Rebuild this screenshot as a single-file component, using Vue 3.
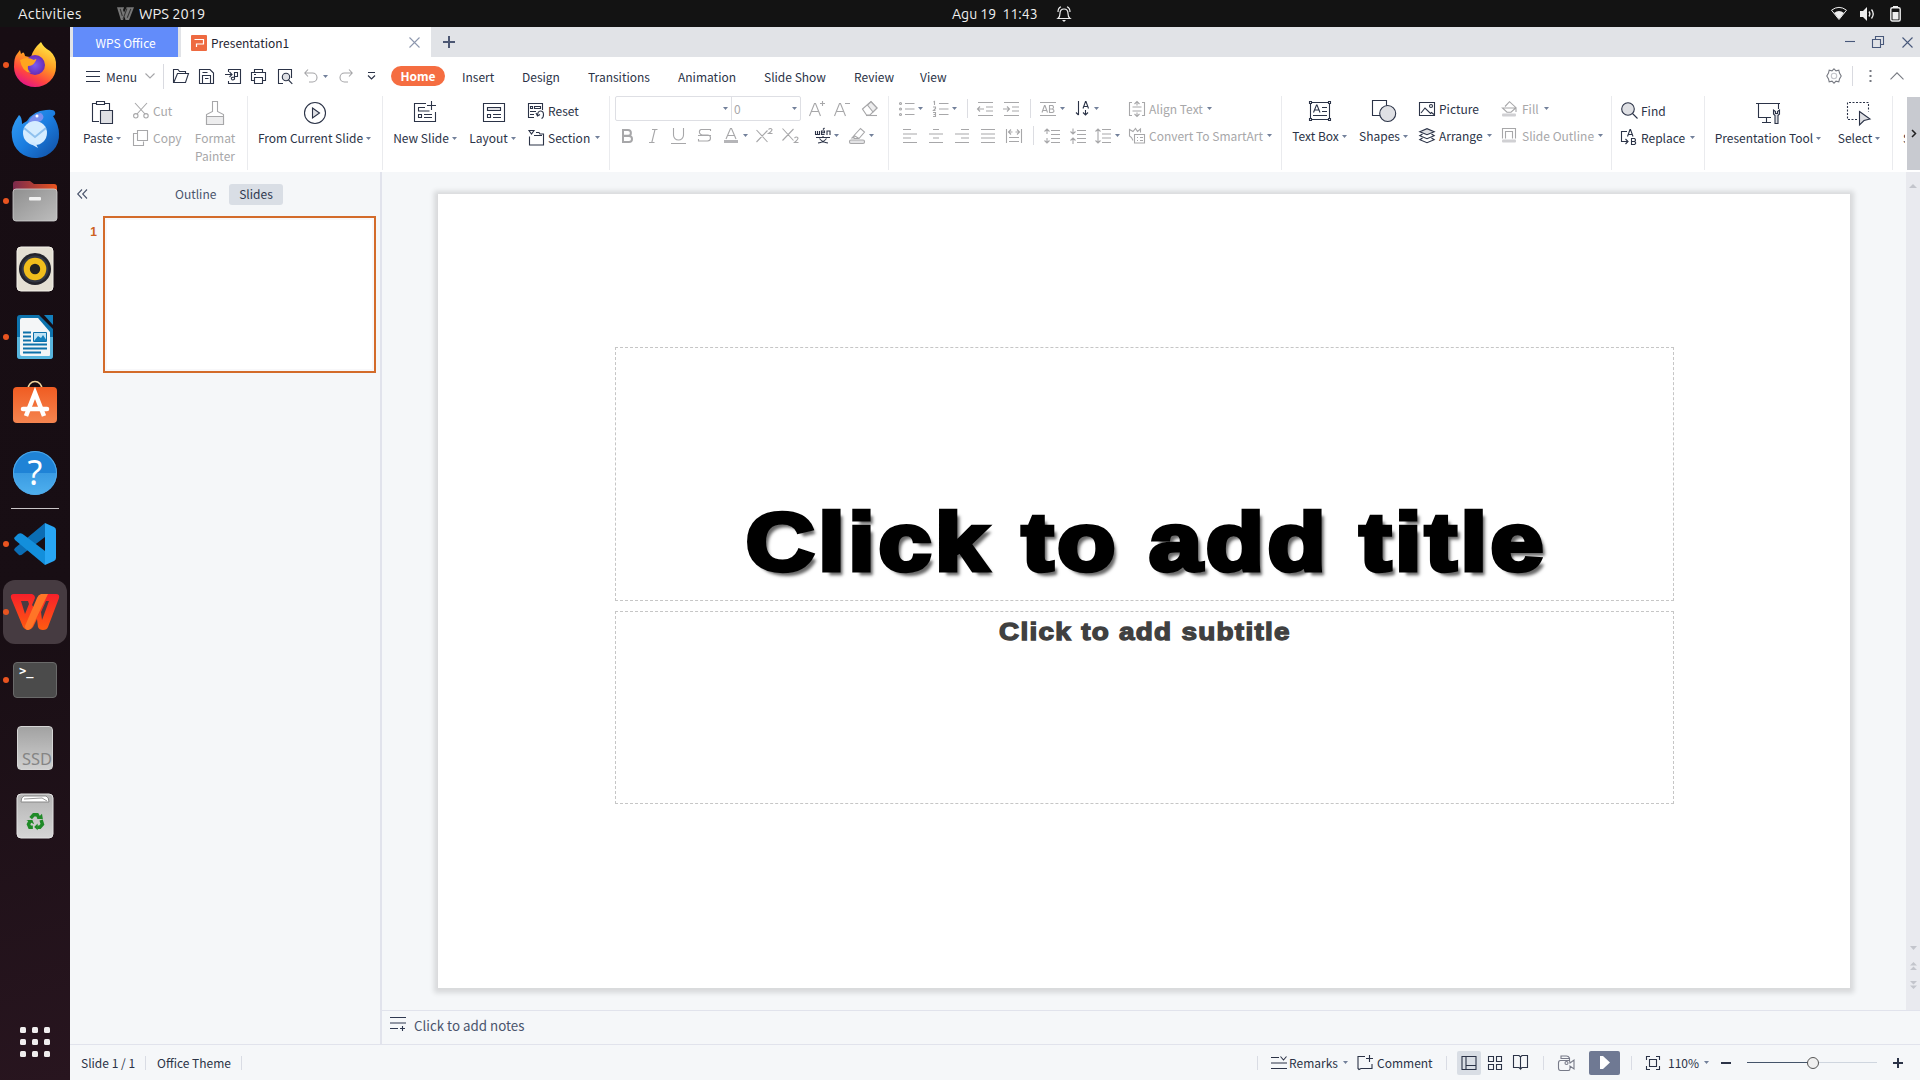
<script setup>
import { h } from 'vue'

// Line icons, drawn on a pixel grid: [width, height, markup]
const glyphs = {
  burger: [14, 11, '<path d="M0 .5h14M0 5.5h14M0 10.5h14"/>'],
  chevDown: [10, 6, '<path d="M.5.5 5 5 9.5.5"/>'],
  chevUp: [14, 8, '<path d="M.5 7.300 7 .8l6.500 6.500"/>'],
  open: [16, 14, '<path d="M12.500 4.500v-2h-6l-1.500-2H.5v13h12l3-9H4.500L1 13"/>'],
  save: [15, 15, '<path d="M.5.5h10.500l3.500 3.500v10.500H.5zM3.500 14.500v-8h8v8M6 9.500h3.500M3.500 3.500h5"/>'],
  pdf: [16, 15, '<path d="M3.500 3V.5h12v14h-12V12M0 5.500h7M4.500 3l2.500 2.500L4.500 8M9.500 3.500h3v4h-3zM9.500 7.500v2.500q-2 2-3 0t3-2"/>'],
  print: [15, 15, '<path d="M3.500 3.500v-3h8v3M3.500 11.500h-3v-8h14v8h-3M3.500 8.500h8v6h-8zM3 5.500h2"/>'],
  preview: [15, 15, '<path d="M5 14.500H.5V.5h13V9"/><circle cx="8" cy="8" r="3.700" fill="#dfe0e4"/><path d="M10.500 11l3.800 3.800"/>'],
  undo: [14, 14, '<path d="M4 .5.8 4 4 7.500M1 4h7.500a4.500 4.500 0 0 1 0 9H5"/>'],
  redo: [14, 14, '<path d="M10 .5l3.200 3.500L10 7.500M13 4H5.500a4.500 4.500 0 0 0 0 9H9"/>'],
  more: [9, 8, '<path d="M1 .5h7M1 3.500l3.500 3.500L8 3.500"/>'],
  gear: [16, 16, '<path d="M8 .8 10 2.800l2.800-.6.7 2.900L15.200 8l-1.700 2.900-.7 2.900-2.800-.6L8 15.200l-2-2-2.800.6-.7-2.900L.8 8l1.700-2.900.7-2.900 2.800.6z"/><circle cx="8" cy="8" r="2.700" stroke="#c5c6cb"/>'],
  dots: [3, 13, '<path d="M.5 0h2v2h-2zM.5 5h2v2h-2zM.5 10h2v2h-2z" fill="currentColor" stroke="none"/>'],
  caret: [5, 3, '<path d="M0 0h5L2.500 3z" fill="currentColor" stroke="none"/>'],
  close: [11, 11, '<path d="M.5.5l10 10M10.500.5l-10 10"/>'],
  plus: [12, 12, '<path d="M6 0v12M0 6h12" stroke-width="2"/>'],
  minus: [10, 2, '<path d="M0 1h10" stroke-width="2"/>'],
  plusSm: [10, 10, '<path d="M5 0v10M0 5h10" stroke-width="2"/>'],
  minimize: [10, 2, '<path d="M0 .5h10"/>'],
  restore: [12, 12, '<path d="M.5 3.500h8v8h-8zM3.500 3.500v-3h8v8h-3"/>'],
  collapse: [11, 10, '<path d="M5 .5.7 5 5 9.500M10 .5 5.700 5 10 9.500"/>'],

  paste: [24, 24, '<path d="M8 20.500H1.500v-18h4M13.500 2.500h5V9M5.500.5h8v3h-8z"/><path d="M9.500 9.500h12v13h-12z" fill="#dfe0e4"/>'],
  cut: [16, 16, '<path d="M2 0l10 11M14 0L4 11"/><circle cx="2.800" cy="12.800" r="2.200"/><circle cx="13" cy="12.800" r="2.200"/>'],
  copy: [16, 16, '<path d="M4.500 3.500h-4v12h10v-4M4.500.5h10v10h-10z"/>'],
  painter: [24, 24, '<path d="M9.500.5h5v10l6 3v10h-17v-10l6-3z"/><path d="M3.500 15.500h17v8h-17z" fill="#ededee"/>'],
  play: [24, 24, '<circle cx="12" cy="12" r="10.500"/><path d="M9.500 7l7 5-7 5z" fill="#dfe0e4"/>'],
  newSlide: [24, 24, '<path d="M13 2.500H1.500v18h21V11M18.500 0v9M14 4.500h9M5 6.500h7M5.500 6.500v3.500h11M5.500 13.500h3v3h-3zM11 13.500h8M11 16.500h8"/>'],
  layout: [24, 24, '<path d="M2.500 2.500h21v18h-21z"/><path d="M6.500 6.500h13v3h-13z" fill="#dfe0e4"/><path d="M6.500 13.500h3v3h-3zM12 13.500h8M12 16.500h8"/>'],
  reset: [16, 16, '<path d="M6 14.500H.5V.5h14V7M2.500 3.500h2v2h-2zM6.500 3.500h6v2h-6zM2 8.500h6M2 11.500h4M8 10l1.500 3L12 11.500M9.500 13q0-5 3-5t3 3.500-2 4"/>'],
  section: [16, 16, '<path d="M1 .5h5L3.500 4zM1.500 6.500v8.500h14v-11H12L11 2.500H8M6 5.500h8"/>'],

  aPlus: [16, 16, '<path d="M.5 15 5.500 2.500h1L11.500 15M2.500 10.500h7.500M11 2.500h5M13.500 0v5"/>'],
  aMinus: [16, 16, '<path d="M.5 15 5.500 2.500h1L11.500 15M2.500 10.500h7.500M11 2.500h5"/>'],
  eraser: [16, 15, '<path d="M.5 8 9 .5 15 7l-7 7H4.500z"/><path d="M5.500 4 9 .8 15 7l-4 4z" fill="#ededee"/><path d="M4 14.500h11"/>'],
  bold: [12, 14, '<path d="M2 1h5a2.800 2.800 0 0 1 0 5.800H2zM2 7h6a3 3 0 0 1 0 6H2z" stroke-width="2"/>'],
  italic: [9, 14, '<path d="M3 .5h5.500M0 13.500h5.500M6 .5 2.800 13.500"/>'],
  underline: [15, 16, '<path d="M2.500 0v7a5 5 0 0 0 10 0V0M0 15.500h15"/>'],
  strike: [13, 15, '<path d="M12.500 3V1.500H3Q1 2 1.500 5q1 2 3 2h5q3 0 3 3 0 3-3 3H.5V11M0 7.500h13"/>'],
  fontColor: [14, 15, '<path d="M2 11 6.500.5h1L12 11M3.500 7.500h7"/><path d="M0 12h14v3H0z" fill="#b5b5b8" stroke="none"/>'],
  superS: [17, 15, '<path d="M.5 2l11 12M11.500 2.500l-11 11.500M12.500 1.500q2-2 3.500 0 0 1.500-3.500 4h4"/>'],
  subS: [17, 16, '<path d="M.5.5l11 12M11.500 1l-11 11.500M12.500 10q2-2 3.500 0 0 1.500-3.500 4.500h4"/>'],
  wen: [16, 16, '<path d="M.5 3v3.500h4V3M2.500 3v3.500M9.500 6.500h-3v-3.500h3v1.700h-3M8 1.500 9.500 0M12 7V3h3v4M1 9.500h14M8 8v1.500M4.500 10.500q3 4 8.500 4.500M11.500 10.500q-3 4-8.500 4.500"/>'],
  marker: [16, 16, '<path d="M5 7.500 11.500.5l4 3.500-5.500 6.500H5zM5 7.500l5 3M5 8l-2.500 2.500"/><rect x=".5" y="12" width="15" height="3.500" rx="1.500" fill="#e3e3e5"/>'],
  bullets: [16, 16, '<path d="M6 2.500h9.500M6 8h9.500M6 13.500h9.500"/><circle cx="1.500" cy="2.500" r="1"/><circle cx="1.500" cy="8" r="1"/><circle cx="1.500" cy="13.500" r="1"/>'],
  numbers: [16, 16, '<path d="M6 2.500h9.500M6 8h9.500M6 13.500h9.500M.5 1l1-.5V4M0 6h2.500v1.500L.5 9.500h2M0 11.500h2.500v4H0M.5 13.500h2"/>'],
  outdent: [16, 14, '<path d="M1 .5h15M9 5h7M9 9h7M1 13.500h15M.5 7H7M3 4.500.5 7 3 9.500"/>'],
  indent: [16, 14, '<path d="M1 .5h15M9 5h7M9 9h7M1 13.500h15M0 7h6.500M4 4.500 6.500 7 4 9.500"/>'],
  ab: [16, 14, '<path d="M0 .5h16M0 13.500h16M2 10.500l2.500-7h.5l2.500 7M3 8.500h3.500M9.500 3.500v7h3q3-1.500 0-3.500h-3 3q2-2 0-3.500z"/>'],
  sort: [14, 15, '<path d="M2.500 0v14M0 11.500 2.500 14M9.500 9v5M7 11.500 9.500 14 12 11.500M7 7.500 9.500.5h.5l2.500 7M8 5.500h4"/>'],
  alignText: [16, 16, '<path d="M3 1.500H.5v13H3M13 1.500h2.500v13H13M3.500 6h9M3.500 10h9M8 .5v4M5.500 3 8 .5 10.500 3M8 11.500v4M5.500 13 8 15.500 10.500 13"/>'],
  left: [14, 14, '<path d="M0 .5h8M0 5h14M0 9h8M0 13.500h14"/>'],
  center: [14, 14, '<path d="M4 .5h6M0 5h14M4 9h6M0 13.500h14"/>'],
  right: [14, 14, '<path d="M6 .5h8M0 5h14M6 9h8M0 13.500h14"/>'],
  justify: [14, 14, '<path d="M0 .5h14M0 5h14M0 9h14M0 13.500h14"/>'],
  spread: [16, 14, '<path d="M.5 0v14M15.500 0v14M3 8.500h10M3 12.500h10M2.500 3h4M9.500 3h4M5 .5 2.500 3 5 5.500M11 .5 13.500 3 11 5.500"/>'],
  spaceUp: [16, 16, '<path d="M7 2.500h9M7 6.500h9M7 10.500h9M7 14.500h9M3 1v5M.5 3.500 3 1l2.500 2.500M3 10v5M.5 12.500 3 15l2.500-2.500"/>'],
  spaceDown: [16, 16, '<path d="M7 2.500h9M7 6.500h9M7 10.500h9M7 14.500h9M3 .5v5M.5 3.500 3 6l2.500-2.500M3 10v6M.5 12.500 3 10l2.500 2.500"/>'],
  lineHeight: [16, 16, '<path d="M7 1.500h9M7 6h9M7 10h9M7 14.500h9M3 1v14M.5 3.500 3 1l2.500 2.500M.5 12.500 3 15l2.500-2.500"/>'],
  smartArt: [16, 16, '<path d="M4 12.500 2.500 9.500.5 8V1.500L4 3.500 6.500.5l2 3 3-2.500v3.500M5.500 6.500h10v8.500h-10zM8 9.500h1M11 9.500h3M8 12.500h1M11 12.500h3"/>'],

  textBox: [24, 24, '<path d="M2.500 3.500h19v17h-19z"/><path d="M1.500 2.500h2v2h-2zM20.500 2.500h2v2h-2zM1.500 19.500h2v2h-2zM20.500 19.500h2v2h-2z" fill="#fff"/><path d="M5.500 13.500 8.500 6h.5l3 7.500M6.500 11h4.500M14 8.500h5M14 12.500h5M5 16.500h14"/>'],
  shapes: [24, 24, '<path d="M.5 1.500h14v15H.5z"/><circle cx="15.700" cy="14.500" r="8" fill="#dfe0e4"/>'],
  picture: [16, 14, '<path d="M.5.500h15v13H.5zM2 11l4-5 5.500 5.500 1-1L15 12.500"/><circle cx="12" cy="4" r="1.500"/>'],
  arrange: [16, 16, '<path d="M.8 3.700 8 .7l7.200 3L8 6.700z" fill="#dfe0e4"/><path d="M3.500 6 .8 7.700l7.200 3 7.200-3L12.500 6M3.500 10 .8 11.700l7.200 3 7.200-3L12.500 10"/>'],
  fill: [15, 16, '<path d="M3 5.500 7.500.7l6.500 6-5 4.500H5L.5 7h13.500v4"/><rect x="0" y="12.500" width="14" height="3" rx="1" fill="#d0d0d3" stroke="none"/>'],
  outline: [15, 15, '<path d="M.5 10.500V.5h13v10M3.500 10.500v-7h7v7"/><rect x="0" y="11.500" width="14" height="3" rx="1" fill="#d0d0d3" stroke="none"/>'],
  find: [17, 17, '<circle cx="7" cy="7" r="6.300" fill="#dfe0e4"/><path d="M11.500 11.500l5 5"/>'],
  replace: [16, 17, '<path d="M6 2.500H.5v10h6M4.500 10l2.500 2.500L4.500 15M6.500 7.500 9 .5h.5l2.500 7M7.500 5.500h3.500M10.500 9.500v6h3q2.500-1.500 0-3h-3 3q2-1.500 0-3z"/>'],
  tool: [25, 24, '<path d="M0 2.500h24M2.500 2.500v14H15M22.500 3v5M10.500 17v4M6 21.500h9"/><path d="M17.500 9v4l1.500 1.500v8h3v-8l1.500-1.500V9l-2 1.500v2h-2v-2z" fill="#dfe0e4"/>'],
  select: [24, 24, '<path d="M10 18.500H.5v-17h21v9" stroke-dasharray="2 1.500"/><path d="M12.500 10.500 23 18l-6 1.500-4.500 4.500z" fill="#dfe0e4"/>'],

  notes: [16, 13, '<path d="M0 .5h16M0 6h16M0 11.500h8M12.500 9v5M10 11.500h5"/>'],
  remarks: [16, 13, '<path d="M0 1.500h8M0 7h16M0 12.500h16M9.500.5 12.500 4l3-3.500"/>'],
  comment: [16, 15, '<path d="M8 1.500H1v12l1 1 2-1h11V9M12.500 0v7M9 3.500h7"/>'],
  normal: [16, 14, '<path d="M1 .5h14v13H1zM5 .5v13M5 9.500h10"/>'],
  sorter: [14, 14, '<path d="M.5.5h5v5h-5zM8.500.5h5v5h-5zM.5 8.500h5v5h-5zM8.500 8.500h5v5h-5z"/>'],
  reading: [16, 15, '<path d="M7.500 2V14L6 12.500H.5V.5H6L7.500 2 9 .5h5.500v12H9L7.500 14"/>'],
  camera: [17, 16, '<path d="M11.500 5V3q-1-2-3-2H3v2.500h8.500M11.500 5.500h-9Q.5 5.500.5 8v5q0 2.500 2 2.500h8q1.500 0 1.500-2V11l4 3V5l-4 3z"/><circle cx="8.500" cy="8" r="1.500"/>'],
  fit: [14, 14, '<path d="M4 .5H.5V4M10 .5h3.500V4M4 13.500H.5V10M10 13.500h3.500V10M3.500 3.500h7v7h-7z"/>'],
}

const Icon = ({ n }) => {
  const [w, ht, markup] = glyphs[n]
  return h('svg', {
    class: 'ic', width: w, height: ht, viewBox: `0 0 ${w} ${ht}`,
    fill: 'none', stroke: 'currentColor', 'stroke-width': 1.1, innerHTML: markup,
  })
}
Icon.props = ['n']

const menus = ['Insert', 'Design', 'Transitions', 'Animation', 'Slide Show', 'Review', 'View']
</script>

<template>
  <div class="desktop">
    <header class="topbar">
      <span class="activities">Activities</span>
      <svg class="wpsmini" width="17" height="13" viewBox="0 0 48 36"><path d="M0 0h20l-3 8 3 7 7-15h21L34 36H24l-3-9-4 9h-6z" fill="#777"/><path d="M9 5l6 20M28 4L17 34M39 5L29 30" stroke="#333" stroke-width="3"/></svg>
      <span class="appname">WPS 2019</span>
      <span class="clock">Agu 19&nbsp; 11:43</span>
      <svg class="bell" width="14" height="16" viewBox="0 0 14 16" fill="none" stroke="#eee" stroke-width="1.200"><path d="M1 12.500h12q-2-1.500-2-5c0-3-1.500-4.500-4-4.500S3 4.500 3 7.500q0 3.500-2 5zM1 6Q1 2 4 .8M13 6Q13 2 10 .8"/><path d="M5 14h4l-2 2z" fill="#eee" stroke="none"/></svg>
      <svg class="wifi" width="16" height="13" viewBox="0 0 16 13"><path d="M.5 3.200Q8-2.500 15.500 3.200L8 12.500z" fill="none" stroke="#eee"/><path d="M3 6q5-4 10 0l-5 6z" fill="#eee"/></svg>
      <svg class="sound" width="16" height="14" viewBox="0 0 16 14" fill="none" stroke="#eee" stroke-width="1.300"><path d="M0 4h3l4-4v14l-4-4H0z" fill="#eee" stroke="none"/><path d="M9 4.500q1.800 2.500 0 5M11.500 2.500q3.500 4.500 0 9"/></svg>
      <svg class="battery" width="11" height="16" viewBox="0 0 11 16"><path d="M3 0h5v2H3z" fill="#eee"/><rect x=".8" y="1.800" width="9.400" height="13.200" rx="1.500" fill="none" stroke="#eee" stroke-width="1.400"/><path d="M2.500 6h6v7.500h-6z" fill="#eee"/></svg>
    </header>

    <div class="body">
      <nav class="dock">
        <div class="app run">
          <svg width="44" height="46" viewBox="0 0 44 46">
            <defs>
              <linearGradient id="ff" x1=".8" y1="0" x2=".3" y2="1"><stop offset="0" stop-color="#fff04a"/><stop offset=".45" stop-color="#ff9a22"/><stop offset=".75" stop-color="#ff4540"/><stop offset="1" stop-color="#e3148a"/></linearGradient>
              <radialGradient id="fg"><stop offset="0" stop-color="#7a5cf0"/><stop offset="1" stop-color="#6a2bb5"/></radialGradient>
            </defs>
            <path d="M28 0q3 6 9 9 7 6 6 16a21 20 0 0 1-42 0Q1 15 4 12l3-4 1 4q3-4 4 2 3 1 6 1 2-8 10-15z" fill="url(#ff)"/>
            <circle cx="22" cy="23" r="10" fill="url(#fg)"/>
            <path d="M7 18q7-4 14 0 4-3 1 2-2 4-7 4-1 4 3 7-9-1-11-13z" fill="#ffa51f"/>
          </svg>
        </div>
        <div class="app">
          <svg width="50" height="48" viewBox="0 0 50 48">
            <defs><linearGradient id="tb" x1="0" y1="0" x2="1" y2="1"><stop offset="0" stop-color="#35a0f5"/><stop offset=".5" stop-color="#1a7de0"/><stop offset="1" stop-color="#114c9f"/></linearGradient></defs>
            <path d="M17 12Q23 2 36 1q8-1 9 2 1 3-2 4 6 9 6 18a23 22 0 0 1-47 3Q0 18 9 6q3 2 3 9z" fill="url(#tb)"/>
            <path d="M18 14Q22 4 31 4q5 4 0 8l-8 3z" fill="#7b90ef"/>
            <circle cx="27" cy="7" r="1.500" fill="#fff"/>
            <circle cx="25" cy="24" r="12" fill="#d5ecff"/>
            <path d="M14 19l11 9 11-9" fill="none" stroke="#8fc1ee" stroke-width="2"/>
            <path d="M19 34l9 5-3-6z" fill="#cfe8ff"/>
          </svg>
        </div>
        <div class="app run">
          <svg width="46" height="42" viewBox="0 0 46 42">
            <defs>
              <linearGradient id="fd"><stop offset="0" stop-color="#7a2a4c"/><stop offset="1" stop-color="#e9541f"/></linearGradient>
              <linearGradient id="fa" x1="0" y1="0" x2="1" y2="1"><stop offset="0" stop-color="#8f8f8f"/><stop offset="1" stop-color="#bdbdbd"/></linearGradient>
            </defs>
            <path d="M1 14V4q0-3 3-3h14l4 3h20q3 0 3 3v8z" fill="url(#fd)"/>
            <rect x="1" y="9" width="44" height="32" rx="3" fill="url(#fa)" stroke="#d0d0d0" stroke-width=".8"/>
            <rect x="17" y="17" width="12" height="3.500" rx="1" fill="#f2f2f2"/>
          </svg>
        </div>
        <div class="app">
          <svg width="38" height="46" viewBox="0 0 38 46">
            <rect x="1" y="1" width="36" height="44" rx="4" fill="#e4dfd3" stroke="#f4f1ea"/>
            <circle cx="19" cy="23" r="16" fill="#23232b"/><circle cx="19" cy="23" r="13.500" fill="#333844"/>
            <circle cx="19" cy="23" r="11.300" fill="#f0bd1c"/><circle cx="19" cy="23" r="5.200" fill="#222"/>
          </svg>
        </div>
        <div class="app run">
          <svg width="38" height="46" viewBox="0 0 38 46">
            <path d="M4 1h19l14 14v27q0 3-3 3H4q-3 0-3-3V4q0-3 3-3z" fill="#0d73ad"/>
            <path d="M1 23h36v19q0 3-3 3H4q-3 0-3-3z" fill="#58b5dd"/>
            <path d="M28 1h9v10z" fill="#1380bd"/>
            <path d="M6 4h16l12 14v23q0 1-1 1H6q-2 0-2-2V6q0-2 2-2z" fill="#f4f6f7"/>
            <path d="M7 18.500h8M7 22.500h8M7 26.500h8M7 30.500h24M7 34.500h24M7 38.500h18" stroke="#0d71aa" stroke-width="2"/>
            <path d="M17.500 18.500h13v9h-13z" fill="#bfe3f5" stroke="#0d71aa"/><path d="M18 27l4-5 3 2 2-3 4 6z" fill="#1380bd"/>
          </svg>
        </div>
        <div class="app">
          <svg class="store" width="46" height="46" viewBox="0 0 46 46">
            <defs><linearGradient id="sw" x1="0" y1="0" x2="0" y2="1"><stop offset="0" stop-color="#f05c22"/><stop offset="1" stop-color="#f58550"/></linearGradient></defs>
            <path d="M16 10a7 7.500 0 0 1 14 0" fill="none" stroke="#f3d7a0" stroke-width="1.500"/>
            <rect x="1" y="8" width="44" height="36" rx="4" fill="url(#sw)"/>
            <path d="M14 37l9-23 9 23" fill="none" stroke="#fff" stroke-width="4.500"/>
            <path d="M11 30h24" stroke="#fff" stroke-width="4.500" stroke-linecap="round"/>
          </svg>
        </div>
        <div class="app"><span class="help">?</span></div>
        <div class="rule"></div>
        <div class="app run">
          <svg width="44" height="44" viewBox="0 0 44 44">
            <path d="M1 28l5 5Q8 34 11 31L32 15V1L2 26z" fill="#0b6db4"/>
            <path d="M1 16l4-4q3-2 6 1l21 16v14L2 18z" fill="#138fdc"/>
            <path d="M32 1l9 4q2 1 2 3v28q0 2-2 3l-9 4z" fill="#28a6f4"/>
          </svg>
        </div>
        <div class="app run active">
          <svg width="50" height="38" viewBox="0 0 50 38">
            <defs><linearGradient id="wp" x1="0" y1="0" x2="0" y2="1"><stop offset="0" stop-color="#f7202a"/><stop offset="1" stop-color="#ff5b10"/></linearGradient></defs>
            <path d="M1 5Q0 1 4 1h18q3 1 3 4l-3 7 3 4 5-12q2-3 5-3h11q4 0 3 4L38 34q-1 3-5 3t-5-3l-1-8-4 8q-2 3-5 3t-5-3z" fill="url(#wp)"/>
            <path d="M11 8h7l1 3-4 10zM36 8h3l-7 19-1-8z" fill="#483b41"/>
            <path d="M31 1h7L22 34q-2 3-4 3-3 0-3-4L27 5q1-3 4-4z" fill="#ff7527"/>
          </svg>
        </div>
        <div class="app run"><span class="term">&gt;_</span></div>
        <div class="app"><span class="ssd">SSD</span></div>
        <div class="app">
          <svg width="38" height="46" viewBox="0 0 38 46">
            <defs><linearGradient id="tr" x1="0" y1="0" x2="0" y2="1"><stop offset="0" stop-color="#b4b4b4"/><stop offset="1" stop-color="#d6d6d6"/></linearGradient></defs>
            <rect x="1" y="1" width="36" height="44" rx="4" fill="url(#tr)" stroke="#e4e4e4"/>
            <path d="M5 9q0-5 3-6h22q3 1 3 6z" fill="#fff" stroke="#888"/><path d="M8 6l18-1 5 3" fill="none" stroke="#999"/>
            <g transform="translate(2.500 4.300) scale(.87)">
              <g fill="none" stroke="#1f8a27" stroke-width="4"><path d="M14 24l3.500-4h4l2 3.500"/><path d="M26 26l1.500 5-3 3.500h-3"/><path d="M16.500 34.500h-3.500L11.500 31l2-4"/></g>
              <path d="M21 25h7l-1-6zM22 30v8l-4-4zM9 26h7l2 5z" fill="#1f8a27"/>
            </g>
          </svg>
        </div>
        <div class="grid"><i v-for="k in 9" :key="k"></i></div>
      </nav>

      <main class="window">
        <div class="tabs">
          <span class="tab home">WPS Office</span>
          <span class="tab doc">
            <svg width="16" height="16" viewBox="0 0 16 16"><rect width="16" height="16" rx="1" fill="#ee6a41"/><path d="M3.500 4.500h9v4.500H5.500V12" fill="none" stroke="#fff" stroke-width="1.200"/></svg>
            <span>Presentation1</span>
            <Icon n="close" />
          </span>
          <Icon class="addtab" n="plus" />
          <div class="winctl"><Icon n="minimize" /><Icon n="restore" /><Icon n="close" /></div>
        </div>

        <div class="menurow">
          <Icon n="burger" /><span>Menu</span><Icon class="faint" n="chevDown" /><i class="vr"></i>
          <Icon n="open" /><Icon n="save" /><Icon n="pdf" /><Icon n="print" /><Icon n="preview" />
          <Icon class="off" n="undo" /><Icon class="car" n="caret" /><Icon class="off" n="redo" /><Icon n="more" />
          <b class="pill">Home</b>
          <span v-for="m in menus" :key="m">{{ m }}</span>
          <Icon class="mid" n="gear" /><i class="vr short"></i><Icon class="mid" n="dots" /><Icon class="mid" n="chevUp" />
        </div>

        <div class="ribbon">
          <section class="g clip">
            <div class="big"><Icon n="paste" /><span>Paste<Icon class="car" n="caret" /></span></div>
            <div class="stack off">
              <div class="it"><Icon n="cut" /><span>Cut</span></div>
              <div class="it"><Icon n="copy" /><span>Copy</span></div>
            </div>
            <div class="big off"><Icon n="painter" /><span>Format</span><span>Painter</span></div>
          </section>
          <section class="g from">
            <div class="big"><Icon n="play" /><span>From Current Slide<Icon class="car" n="caret" /></span></div>
          </section>
          <section class="g slides">
            <div class="big"><Icon n="newSlide" /><span>New Slide<Icon class="car" n="caret" /></span></div>
            <div class="big"><Icon n="layout" /><span>Layout<Icon class="car" n="caret" /></span></div>
            <div class="stack">
              <div class="it"><Icon n="reset" /><span>Reset</span></div>
              <div class="it"><Icon n="section" /><span class="w47">Section</span><Icon class="car" n="caret" /></div>
            </div>
          </section>
          <section class="g rows font off">
            <div class="fr1">
              <div class="combo"><span class="fam"><Icon class="car" n="caret" /></span><span class="size">0<Icon class="car" n="caret" /></span></div>
              <Icon n="aPlus" /><Icon n="aMinus" /><Icon n="eraser" />
            </div>
            <div class="fr2">
              <Icon n="bold" /><Icon n="italic" /><Icon n="underline" /><Icon n="strike" /><Icon n="fontColor" /><Icon class="car" n="caret" />
              <Icon n="superS" /><Icon n="subS" /><Icon class="on" n="wen" /><Icon class="car" n="caret" /><Icon n="marker" /><Icon class="car" n="caret" />
            </div>
          </section>
          <section class="g rows para off">
            <div class="pr1">
              <Icon n="bullets" /><Icon class="car" n="caret" /><Icon n="numbers" /><Icon class="car" n="caret" /><i class="vs"></i>
              <Icon n="outdent" /><Icon n="indent" /><i class="vs"></i><Icon n="ab" /><Icon class="car" n="caret" />
              <Icon class="on" n="sort" /><Icon class="car" n="caret" /><Icon n="alignText" /><span>Align Text</span><Icon class="car" n="caret" />
            </div>
            <div class="pr2">
              <Icon n="left" /><Icon n="center" /><Icon n="right" /><Icon n="justify" /><Icon n="spread" /><i class="vs"></i>
              <Icon n="spaceUp" /><Icon n="spaceDown" /><Icon n="lineHeight" /><Icon class="car" n="caret" />
              <Icon n="smartArt" /><span>Convert To SmartArt</span><Icon class="car" n="caret" />
            </div>
          </section>
          <section class="g draw">
            <div class="big"><Icon n="textBox" /><span>Text Box<Icon class="car" n="caret" /></span></div>
            <div class="big"><Icon n="shapes" /><span>Shapes<Icon class="car" n="caret" /></span></div>
            <div class="stack">
              <div class="it"><Icon n="picture" /><span>Picture</span></div>
              <div class="it"><Icon n="arrange" /><span class="w48">Arrange</span><Icon class="car" n="caret" /></div>
            </div>
            <div class="stack off">
              <div class="it"><Icon n="fill" /><span class="w22">Fill</span><Icon class="car" n="caret" /></div>
              <div class="it"><Icon n="outline" /><span class="w76">Slide Outline</span><Icon class="car" n="caret" /></div>
            </div>
          </section>
          <section class="g search">
            <div class="stack">
              <div class="it"><Icon n="find" /><span>Find</span></div>
              <div class="it"><Icon n="replace" /><span class="w49">Replace</span><Icon class="car" n="caret" /></div>
            </div>
          </section>
          <section class="g tools">
            <div class="big"><Icon n="tool" /><span>Presentation Tool<Icon class="car" n="caret" /></span></div>
            <div class="big"><Icon n="select" /><span>Select<Icon class="car" n="caret" /></span></div>
          </section>
          <section class="cutoff">S</section>
          <div class="scrollbtn"><svg width="6" height="9" viewBox="0 0 6 9" fill="none" stroke="#222" stroke-width="1.500"><path d="M1 1l3.500 3.500L1 8"/></svg></div>
        </div>

        <div class="work">
          <aside class="panel">
            <div class="phead"><Icon n="collapse" /><span>Outline</span><span class="sel">Slides</span></div>
            <div class="thumbrow"><b>1</b><div class="thumb"></div></div>
          </aside>
          <div class="right">
            <div class="stage">
              <div class="canvas">
                <div class="slide">
                  <div class="ph title"><span>Click to add title</span></div>
                  <div class="ph sub"><span>Click to add subtitle</span></div>
                </div>
              </div>
              <div class="vscroll">
                <svg width="8" height="4" viewBox="0 0 8 4"><path d="M0 4 4 0l4 4z"/></svg>
                <svg class="dn" width="7" height="4" viewBox="0 0 7 4"><path d="M0 0h7L3.500 4z"/></svg>
                <svg class="d2" width="7" height="8" viewBox="0 0 7 8"><path d="M0 3.500 3.500 0 7 3.500zM0 8l3.500-3.500L7 8z"/></svg>
                <svg class="d3" width="7" height="8" viewBox="0 0 7 8"><path d="M0 0h7L3.500 3.500zM0 4.500h7L3.500 8z"/></svg>
              </div>
            </div>
            <div class="notes"><Icon n="notes" /><span>Click to add notes</span></div>
          </div>
        </div>

        <footer class="status">
          <span>Slide 1 / 1</span><i></i><span>Office Theme</span><i></i>
          <i></i><Icon n="remarks" /><span>Remarks</span><Icon class="car" n="caret" /><Icon n="comment" /><span class="cm">Comment</span><i></i>
          <div class="vbtn"><Icon n="normal" /></div><Icon n="sorter" /><Icon n="reading" /><i></i>
          <Icon class="cam" n="camera" /><div class="pbtn"><svg width="10" height="13" viewBox="0 0 10 13"><path d="M0 0h3l7 6.500L3 13H0z" fill="#fff"/></svg></div><i></i>
          <Icon n="fit" /><span>110%</span><Icon class="car" n="caret" /><Icon n="minus" />
          <div class="slider"><div class="knob"></div></div><Icon n="plusSm" />
        </footer>
      </main>
    </div>
  </div>
</template>

<style>
body { margin: 0; overflow: hidden; }
</style>

<style scoped>
.desktop { width: 1920px; height: 1080px; display: flex; flex-direction: column; overflow: hidden; font-family: "Noto Sans CJK SC", "Noto Sans", sans-serif; font-size: 12px; color: #2b3347; white-space: nowrap; }
.desktop * { box-sizing: border-box; }
svg { display: block; flex: none; overflow: visible; }
.topbar { height: 27px; flex: none; background: #131313; color: #f0f0f0; display: grid; grid-template-columns: 117px 22px 813px 105px 774px 29px 30px 1fr; align-items: center; font-family: Ubuntu, "Noto Sans", sans-serif; font-size: 14px; }
.activities { padding-left: 18px; font-size: 14.670px; letter-spacing: .35px; }
.appname { font-size: 14.600px; }
.body { flex: 1; display: flex; min-height: 0; }

.dock { width: 70px; flex: none; display: flex; flex-direction: column; align-items: center; padding-top: 4px; background: linear-gradient(165deg, #170d13 0%, #180e14 55%, #28151f 100%); }
.app { width: 64px; height: 64px; margin: 2px 0; display: flex; align-items: center; justify-content: center; border-radius: 12px; position: relative; flex: none; }
.app.active { background: #463b41; }
.store { margin-top: -7px; }
.run::before { content: ""; position: absolute; left: 0; top: 29px; width: 6px; height: 6px; border-radius: 3px; background: #e95420; }
.rule { width: 48px; height: 1px; margin: 1px 0; background: #c9c5c7; flex: none; }
.help { width: 44px; height: 44px; border-radius: 22px; background: linear-gradient(#1f83d6 50%, #3a9be2 50%, #4fb0ee); color: #fff; font: 34px/42px "Noto Sans", sans-serif; text-align: center; box-shadow: inset 0 0 0 1px #4fa8e8; }
.term { width: 44px; height: 36px; border-radius: 4px; background: #4b4b4b; border: 1px solid #6a6a6a; color: #fff; font: bold 12px/14px "DejaVu Sans Mono", monospace; padding: 1px 5px; }
.ssd { width: 36px; height: 44px; border-radius: 4px; background: linear-gradient(#a2a2a2, #cfcfcf); border: 1px solid #d5d5d5; color: #858585; font: 16.500px/20px "Noto Sans", sans-serif; padding: 22px 0 0 4px; }
.grid { margin-top: auto; margin-bottom: 23px; display: grid; grid-template-columns: repeat(3, 6px); gap: 6px; }
.grid i { width: 6px; height: 6px; border-radius: 1.500px; background: #f0eeee; }

.window { flex: 1; display: flex; flex-direction: column; min-width: 0; background: #fff; }
.tabs { height: 30px; flex: none; background: #e1e3e7; display: flex; padding-left: 3px; }
.tab { height: 30px; display: flex; align-items: center; line-height: 30px; }
.home { width: 105px; background: #628cfa; color: #fff; justify-content: center; margin-right: 3px; padding-top: 2px; }
.doc { width: 250px; background: #fff; padding: 1px 10px 0; }
.doc span { flex: 1; padding-left: 4px; color: #1f2533; }
.doc .ic { color: #8d97ae; margin-right: 1px; }
.addtab { color: #4c5773; margin: 9px 0 0 12px; }
.winctl { margin-left: auto; display: grid; grid-template-columns: 27px 30px 18px; height: 30px; align-items: center; color: #48587a; }

.menurow { height: 38px; margin-bottom: -3px; flex: none; display: grid; align-items: center; padding-left: 16px;
  grid-template-columns: 20px 39px 18px 10px 26px 26px 26px 27px 26px 19px 16px 28px 24px 71px 60px 66px 90px 86px 90px 66px 906px 26px 17px 21px 1fr; }
.menurow .faint, .menurow .off { color: #a5a5a8; }
.menurow .car { color: #72809a; }
.vr { width: 1px; height: 25px; background: #d9dae0; }
.vr.short { height: 20px; }
.mid { color: #777a82; }
.pill { width: 54px; height: 20px; border-radius: 10px; background: #f56d41; color: #fff; text-align: center; line-height: 20px; }

.car { color: #72809a; }
.off { color: #a7a7a9; }
.on { color: #2b3347; }
.ribbon { height: 80px; flex: none; display: grid; grid-template-columns: 178px 135px 227px 279px 393px 330px 93px 188px 14px 13px; padding-top: 4px; }
.g { height: 74px; border-right: 1px solid #eaebee; display: grid; align-content: start; }
.big { display: flex; flex-direction: column; align-items: center; padding-top: 5px; line-height: 18px; }
.big span { display: flex; align-items: center; gap: 3px; height: 18px; }
.big > .ic + span { margin-top: 4px; }
.stack { display: grid; grid-template-rows: 27px 27px; padding-top: 1px; }
.it { display: grid; grid-template-columns: 20px auto auto; justify-content: start; align-items: center; line-height: 20px; }
.w47 { width: 47px; } .w48 { width: 48px; } .w22 { width: 22px; } .w76 { width: 76px; } .w49 { width: 49px; }
.clip { grid-template-columns: 49px 54px 44px; padding-left: 8px; column-gap: 6px; }
.clip .big:first-child span { margin-left: -1px; }
.from { grid-template-columns: 113px; padding-left: 10px; }
.slides { grid-template-columns: 64px 47px 1fr; padding-left: 10px; column-gap: 12px; }
.rows { grid-template-rows: 25px 29px; }
.rows > div { display: grid; align-items: center; line-height: 20px; }
.fr1 { grid-template-columns: 194px 25px 28px 20px; padding-left: 5px; }
.fr2 { padding-left: 11px; grid-template-columns: 28px 22px 27px 26px 19px 13px 26px 33px 19px 15px 20px 5px; }
.combo { width: 186px; height: 25px; border: 1px solid #dedfe4; border-radius: 2px; display: flex; }
.fam { width: 116px; border-right: 1px solid #dedfe4; display: flex; align-items: center; justify-content: flex-end; padding-right: 3px; }
.size { flex: 1; display: flex; align-items: center; justify-content: space-between; padding: 0 3px 0 2px; }
.pr1 { padding-left: 10px; grid-template-columns: 19px 15px 19px 15px 10px 26px 27px 10px 20px 16px 18px 35px 20px 58px 5px; }
.pr2 { padding-left: 14px; grid-template-columns: 26px 26px 26px 25px 27px 11px 26px 25px 20px 14px 20px 118px 5px; }
.vs { width: 1px; height: 19px; background: #dcdde2; }
.draw { grid-template-columns: 55px 49px 83px 1fr; padding-left: 10px; }
.draw .big:nth-child(2) { margin-left: 12px; margin-right: -12px; }
.draw .big { padding-top: 3px; }
.draw .stack { grid-template-rows: 25px 29px; padding: 0 0 0 23px; }
.search { padding-left: 9px; }
.tools { grid-template-columns: 106px 42px; column-gap: 17px; padding-left: 10px; }
.cutoff { width: 12px; overflow: hidden; line-height: 18px; padding: 33px 0 0 10px; }
.scrollbtn { height: 73px; margin-top: 1px; background: #c8cad0; display: flex; align-items: center; justify-content: center; }

.work { flex: 1; display: flex; min-height: 0; background: #f5f7f9; border-bottom: 1px solid #e1e3ec; }
.panel { width: 312px; border-right: 2px solid #e1e3ec; flex: none; }
.phead { height: 44px; display: grid; grid-template-columns: 98px 54px 54px; align-items: center; padding-left: 7px; color: #4a546c; line-height: 20px; }
.sel { background: #d9dee5; height: 21px; line-height: 20px; border-radius: 3px; text-align: center; color: #2f3950; }
.thumbrow { display: flex; }
.thumbrow b { width: 33px; padding: 8px 6px 0 0; text-align: right; font: bold 12px/16px "Liberation Sans", sans-serif; color: #cd6120; }
.thumb { width: 273px; height: 157px; border: 2px solid #d36b2a; background: #fff; box-shadow: inset 0 0 0 2px #f8f8fa; }
.right { flex: 1; display: flex; flex-direction: column; min-width: 0; }
.stage { flex: 1; display: flex; min-height: 0; }
.canvas { flex: 1; padding: 22px 0 0 56px; }
.slide { width: 1412px; height: 794px; background: #fff; box-shadow: 0 1px 5px 4px rgba(0, 0, 0, .12); padding: 153px 176px 0 177px; display: flex; flex-direction: column; gap: 10px; }
.ph { border: 1px dashed #c6c6c6; display: flex; justify-content: center; font-family: "Arial Black", "Liberation Sans", sans-serif; font-weight: 900; }
.title { height: 254px; align-items: flex-end; padding-left: 4px; }
.title span { font-size: 82px; line-height: 100px; letter-spacing: 3.200px; color: #000; -webkit-text-stroke: 4.500px #000; text-shadow: 4px 5px 3px rgba(0, 0, 0, .6); margin-bottom: 8px; transform: scaleX(1.16); }
.sub { height: 193px; }
.sub span { font-size: 24.500px; line-height: 39px; letter-spacing: 1.100px; color: #404040; -webkit-text-stroke: 1.300px #404040; transform: scaleX(1.14); }
.vscroll { width: 14px; background: #e9eaef; display: flex; flex-direction: column; align-items: center; padding-top: 12px; fill: #c3c5cc; }
.dn { margin-top: 758px; } .d2 { margin-top: 12px; } .d3 { margin-top: 11px; }
.notes { height: 34px; flex: none; border-top: 1px solid #e1e3ec; display: grid; grid-template-columns: 24px 1fr; padding: 0 0 4px 8px; align-items: center; font-size: 13.330px; color: #4a546c; }
.notes .ic { color: #2f3950; margin-bottom: 4px; }

.status { height: 35px; flex: none; background: #f5f7f9; display: grid; align-items: center; padding-left: 11px; line-height: 20px;
  grid-template-columns: 64px 12px 84px 1016px 14px 18px 54px 14px 20px 69px 11px 31px 25px 30px 15px 31px 42px 15px 22px 36px 17px 26px 146px 10px; }
.status i { width: 1px; height: 14px; background: #d9dce4; }
.vbtn { width: 24px; height: 24px; background: #d9dee5; border-radius: 2px; display: grid; place-items: center; }
.pbtn { width: 31px; height: 24px; background: #6f7993; border-radius: 2px; display: grid; place-items: center; }
.cam { color: #777a88; }
.slider { width: 130px; height: 1px; background: linear-gradient(90deg, #44546a 50%, #cfd6df 50%); display: flex; align-items: center; padding-left: 60px; }
.knob { width: 12px; height: 12px; border: 1px solid #555; border-radius: 6px; background: #f0f0f0; flex: none; }
</style>
